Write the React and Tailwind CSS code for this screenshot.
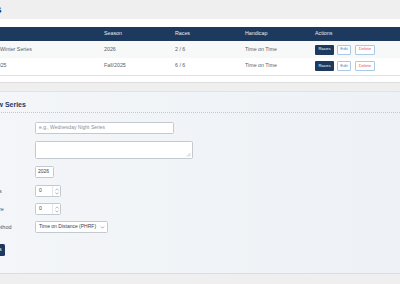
import { ChevronDown } from 'lucide-react';

const series = [
  { name: 'Frostbite Winter Series', season: '2026', races: '2 / 6', handicap: 'Time on Time', shaded: true },
  { name: 'Spring 2025', season: 'Fall/2025', races: '6 / 6', handicap: 'Time on Time', shaded: false },
];

const font = { fontFamily: '"Liberation Sans", Arial, sans-serif' };

function Spinner() {
  return (
    <div className="flex flex-col items-center justify-center gap-[1px] border-l border-[#e3e6ea] px-[1.5px] h-full">
      <svg width="4" height="3" viewBox="0 0 4 3"><path d="M0.5 2.5 L2 0.8 L3.5 2.5" fill="none" stroke="#9aa3ad" strokeWidth="0.7" /></svg>
      <svg width="4" height="3" viewBox="0 0 4 3"><path d="M0.5 0.5 L2 2.2 L3.5 0.5" fill="none" stroke="#9aa3ad" strokeWidth="0.7" /></svg>
    </div>
  );
}

function Row({ label, children, className = '' }) {
  return (
    <div className={`flex items-center ${className}`}>
      <label className="w-[62px] shrink-0 text-[5.5px] text-[#4b5563]">{label}</label>
      {children}
    </div>
  );
}

export default function App() {
  return (
    <div className="w-[400px] h-[284px] overflow-hidden bg-[#efefef]" style={font}>
      <div className="ml-[-60px] w-[520px]">
        <h1 className="h-[19px] pl-[27px] pt-[3px] text-[11.5px] font-bold leading-[13px] text-[#1d3a5e]">Series</h1>

        <div className="ml-[20px] h-[64px] bg-white pt-[8px] pl-[10px] border-b border-[#dcdcdc]">
          <table className="table-fixed w-[480px] border-collapse text-[5.3px]">
            <thead>
              <tr className="h-[14px] bg-[#1d3a5e] text-left text-[#e6ebf1]">
                <th className="w-[126px] pl-[8px] font-normal">Name</th>
                <th className="w-[71px] pl-[8px] font-normal">Season</th>
                <th className="w-[70px] pl-[8px] font-normal">Races</th>
                <th className="w-[70px] pl-[8px] font-normal">Handicap</th>
                <th className="pl-[8px] font-normal">Actions</th>
              </tr>
            </thead>
            <tbody className="text-[#5b6168]">
              {series.map((s) => (
                <tr key={s.name} className={`h-[17px] ${s.shaded ? 'bg-[#f7f8f8]' : 'bg-white border-b border-[#dfe2e5]'}`}>
                  <td className="pl-[8px] whitespace-nowrap">{s.name}</td>
                  <td className="pl-[8px]">{s.season}</td>
                  <td className="pl-[8px]">{s.races}</td>
                  <td className="pl-[8px]">{s.handicap}</td>
                  <td className="pl-[8px]">
                    <div className="flex items-center gap-[3px] text-[4.3px]">
                      <span className="flex h-[10px] w-[19px] items-center justify-center rounded-[1px] bg-[#1d3a5e] text-white">Races</span>
                      <span className="flex h-[10px] w-[14px] items-center justify-center rounded-[1px] border border-[#a9c9e6] bg-white text-[#3f86c6]">Edit</span>
                      <span className="ml-[1px] flex h-[10px] w-[20px] items-center justify-center rounded-[1px] border border-[#a9c9e6] bg-white text-[#e0505e]">Delete</span>
                    </div>
                  </td>
                </tr>
              ))}
            </tbody>
          </table>
        </div>

        <div className="ml-[20px] mt-[8px] h-[183px] border-t border-[#dfe3e8] border-b border-b-[#d9dde2] bg-gradient-to-r from-[#f4f6f9] to-[#edf1f5] pl-[13px]">
          <h2 className="pt-[8px] text-[7px] font-bold leading-[9px] text-[#1d3a5e]">Add New Series</h2>
          <div className="ml-[-13px] mt-[3px] border-b border-dotted border-[#c3c9d1]" />

          <div className="flex flex-col pt-[9px]">
            <Row label="Name">
              <div className="flex h-[12px] w-[139px] items-center rounded-[1.5px] border border-[#c4c9cf] bg-white px-[3px] text-[5px] text-[#8a9099]">
                e.g., Wednesday Night Series
              </div>
            </Row>
            <Row label="Notes" className="mt-[7px]">
              <div className="relative h-[18px] w-[158px] rounded-[1.5px] border border-[#c4c9cf] bg-white">
                <svg className="absolute bottom-[1px] right-[1px]" width="5" height="5" viewBox="0 0 5 5">
                  <path d="M4.5 1 L1 4.5 M4.5 3 L3 4.5" stroke="#9aa0a8" strokeWidth="0.6" />
                </svg>
              </div>
            </Row>
            <Row label="Year" className="mt-[7px]">
              <div className="flex h-[12px] w-[19px] items-center rounded-[1.5px] border border-[#c4c9cf] bg-white px-[2px] text-[5px] text-[#374151]">
                2026
              </div>
            </Row>
            <Row label="Total Races" className="mt-[7px]">
              <div className="flex h-[12px] w-[26px] items-center justify-between rounded-[1.5px] border border-[#c4c9cf] bg-white pl-[3px] text-[5px] text-[#374151]">
                <span>0</span>
                <Spinner />
              </div>
            </Row>
            <Row label="Discard Size" className="mt-[6px]">
              <div className="flex h-[12px] w-[26px] items-center justify-between rounded-[1.5px] border border-[#c4c9cf] bg-white pl-[3px] text-[5px] text-[#374151]">
                <span>0</span>
                <Spinner />
              </div>
            </Row>
            <Row label="Scoring Method" className="mt-[6px]">
              <div className="flex h-[12px] w-[73px] items-center justify-between rounded-[1.5px] border border-[#c4c9cf] bg-white pl-[3px] pr-[2px] text-[5px] text-[#374151]">
                <span>Time on Distance (PHRF)</span>
                <ChevronDown size={5} strokeWidth={2.5} color="#4b5563" />
              </div>
            </Row>
            <div className="mt-[11px] flex">
              <button className="h-[12px] w-[32px] rounded-[1.5px] bg-[#1d3a5e] text-[5.2px] text-white">Add Series</button>
            </div>
          </div>
        </div>
      </div>
    </div>
  );
}
